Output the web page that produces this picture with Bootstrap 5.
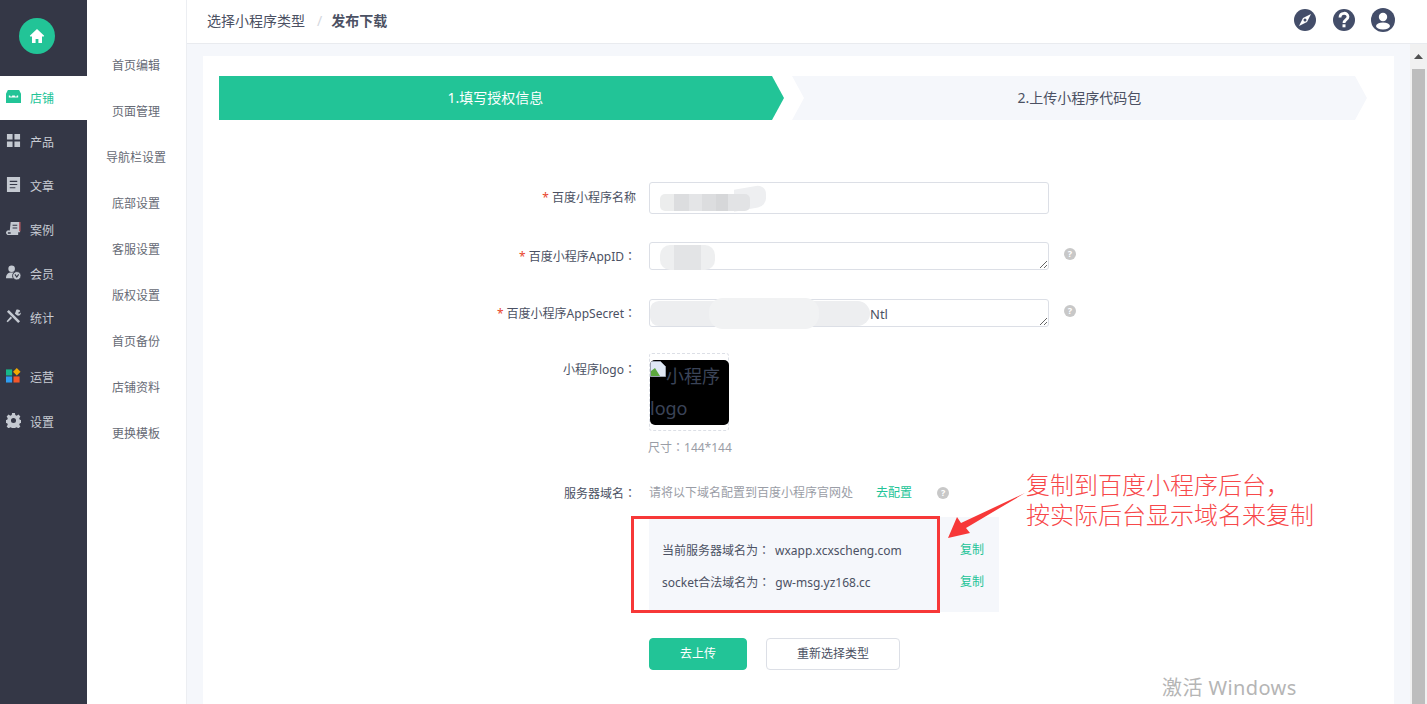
<!DOCTYPE html>
<html lang="zh-CN">
  <head>
    <meta charset="UTF-8" />
    <title>发布下载</title>
    <link href="https://cdn.jsdelivr.net/npm/bootstrap@5.3.0/dist/css/bootstrap.min.css" rel="stylesheet" />
    <style>
      html, body { height: 704px; overflow: hidden; }
      body { font-family: "Noto Sans", "Noto Sans CJK SC", sans-serif; font-size: 12px; color: #4b5163; background: #f5f7fb; }
      .side-main { width: 87px; background: #343746; color: #c8ccd4; }
      .side-logo { height: 76px; padding: 0 0 4px 19px; }
      .logo-dot { width: 36px; height: 36px; border-radius: 50%; background: #22c497; }
      .side-item { height: 44px; padding: 2px 0 0 6px; gap: 9px; color: #c8ccd4; text-decoration: none; }
      .side-item svg { width: 15px; height: 15px; margin-top: -5px; }
      .side-item.on { background: #fff; color: #22c497; }
      .side-gap { height: 15px; }
      .side-item.low { height: 45px; }
      .side-sub { width: 100px; background: #fff; border-right: 1px solid #eceef2; padding-top: 43px; }
      .sub-item { height: 46px; line-height: 46px; text-align: center; color: #666a75; padding-right: 1px; }
      .top-strip { height: 44px; background: #fff; border-bottom: 1px solid #e9ebef; padding: 0 32px 3px 20px; font-size: 14px; }
      .crumb-sep { color: #d4d7de; margin: 0 10px 0 12px; }
      .crumb-now { font-weight: 700; color: #4b5163; font-size: 14px; margin-left: -1px; }
      .top-tools { gap: 15px; }
      .top-icon { width: 24px; height: 24px; }
      .pane-wrap { padding: 12px 16px 0; }
      .white-pane { background: #fff; padding: 20px 27px 0 16px; height: 660px; }
      .scroll-rail { width: 17px; background: #f1f1f1; }
      .scroll-up { height: 25px; }
      .scroll-thumb { width: 13px; height: 640px; background: #bdbdbd; margin-left: 2px; }
      .wizard-a, .wizard-b { height: 44px; font-size: 14px; padding-bottom: 2px; }
      .wizard-a { width: 565px; background: #22c497; color: #fff; padding-right: 12px; clip-path: polygon(0 0, 553px 0, 565px 50%, 553px 100%, 0 100%); }
      .wizard-b { width: 575px; margin-left: 8px; background: #f5f7fb; color: #4b5163; clip-path: polygon(0 0, 563px 0, 575px 50%, 563px 100%, 0 100%, 12px 50%); }
      .form-zone { margin-top: 62px; }
      .field-row { display: flex; }
      .field-name { width: 417px; margin-right: 13px; text-align: right; color: #4b5163; flex: none; }
      .must { color: #e8452c; margin-right: 3px; }
      .wide-colon { font-family: "Noto Sans CJK TC", sans-serif; }
      .field-box { width: 400px; position: relative; flex: none; }
      .text-in { height: 32px; border: 1px solid #dcdfe6; border-radius: 3px; background: #fff; font-size: 12px; padding: 4px 8px; }
      textarea.text-in { height: 28px; min-height: 28px; line-height: 18px; color: #4b5163; display: block; overflow: hidden; }
      textarea.key-in { padding-left: 220px; padding-top: 5px; font-size: 13px; }
      .row-a { line-height: 32px; }
      .row-b { margin-top: 28px; line-height: 27px; }
      .row-c { margin-top: 29px; line-height: 27px; }
      .row-d { margin-top: 26px; line-height: 32px; }
      .row-e { margin-top: 21px; line-height: 30px; }
      .tip-dot { width: 12px; height: 12px; border-radius: 50%; background: #c8c8c8; color: #fff; font-size: 9px; line-height: 12px; text-align: center; font-weight: 700; flex: none; }
      .tip-side { margin: 6px 0 0 15px; }
      .tip-line { margin-left: 25px; }
      .smear { position: absolute; background: #e5e6e8; }
      .smear-a1 { left: 11px; top: 12px; width: 90px; height: 17px; background: linear-gradient(90deg, #eceded 0 16%, #dcdddf 16% 32%, #e4e5e7 32% 47%, #dcdddf 47% 62%, #d6d7d9 62% 76%, #e2e3e5 76% 100%); border-radius: 5px; }
      .smear-a2 { left: 85px; top: 5px; width: 32px; height: 22px; background: #eeeff1; border-radius: 0 10px 8px 0; transform: skewY(-10deg); }
      .smear-b1 { left: 11px; top: 3px; width: 55px; height: 25px; background: linear-gradient(90deg, #eeeff0 0 25%, #e3e4e6 25% 75%, #eeeff0 75% 100%); border-radius: 10px; }
      .smear-c1 { left: 1px; top: 2px; width: 220px; height: 25px; background: #edeef0; border-radius: 10px 14px 14px 10px; }
      .smear-c2 { left: 60px; top: -1px; width: 110px; height: 31px; background: #f1f2f3; border-radius: 14px; }
      .logo-frame { width: 80px; height: 78px; border: 1px dashed #dcdfe6; border-radius: 3px; padding: 6px 0; }
      .logo-black { width: 79px; height: 65px; background: #000; border-radius: 5px; color: #3b4458; font-size: 18px; line-height: 32px; overflow: hidden; }
      .broken-pic { width: 16px; height: 16px; vertical-align: top; margin-top: 1px; }
      .logo-hint { margin: 7px 0 0 -1px; color: #9a9da6; line-height: 18px; font-size: 12px; }
      .muted-line { color: #9a9da6; }
      .go-link { color: #22c497; text-decoration: none; margin-left: 23px; }
      .domain-box { margin-top: 9px; width: 350px; height: 95px; background: #f5f7fb; padding: 17px 15px 0 13px; line-height: 32px; }
      .domain-row { height: 32px; }
      .domain-key { margin-right: 5px; }
      .domain-val { font-size: 12px; }
      .copy-link { color: #22c497; text-decoration: none; }
      .btn-go, .btn-redo { height: 32px; font-size: 12px; border-radius: 4px; padding: 0; line-height: 30px; }
      .btn-go { width: 98px; background: #22c497; border: 1px solid #22c497; color: #fff; }
      .btn-redo { width: 134px; background: #fff; border: 1px solid #dcdfe6; color: #4b5163; margin-left: 19px; }
      .btn-line { margin: 26px 0 0 430px; }
      .mark-rect { position: absolute; left: 631px; top: 516px; width: 309px; height: 97px; border: 3px solid #f73838; }
      .mark-note { position: absolute; left: 1026px; top: 469px; color: #f7484a; font-family: "Noto Sans CJK SC", sans-serif; font-weight: 300; font-size: 24px; line-height: 30px; white-space: nowrap; }
      .mark-arrow { position: absolute; left: 945px; top: 490px; width: 85px; height: 52px; }
      .win-mark { position: absolute; left: 1162px; top: 674px; font-size: 20px; line-height: 28px; letter-spacing: .4px; color: #b5b5b5; font-family: "Noto Sans", "Noto Sans CJK SC", sans-serif; }
    </style>
  </head>
  <body>
    <div class="d-flex">
      <!-- left menu -->
      <div class="side-main flex-shrink-0 vh-100">
        <div class="side-logo d-flex align-items-center">
          <div class="logo-dot d-flex align-items-center justify-content-center">
            <svg width="16" height="16" viewBox="0 0 16 16"><path fill="#fff" d="M8 1 0.8 7.8 2 9 3 8.1V15h3.6v-4h2.8v4H13V8.1l1 .9 1.2-1.2z"/></svg>
          </div>
        </div>
        <a class="side-item on d-flex align-items-center" href="#">
          <svg viewBox="0 0 16 16"><path fill="#22c497" d="M2 1h12l2 4v10H0V5zM3 7v2h10V7h-1.500v1h-2V7h-3v1h-2V7z"/></svg>店铺
        </a>
        <a class="side-item d-flex align-items-center" href="#">
          <svg viewBox="0 0 16 16"><path fill="#c4c9d1" d="M1 1h6v6H1zM9 1h6v6H9zM1 9h6v6H1zM9 9h6v6H9z"/></svg>产品
        </a>
        <a class="side-item d-flex align-items-center" href="#">
          <svg viewBox="0 0 16 16"><path fill="#c4c9d1" d="M1 0h14v16H1zM4 4v1.2h8V4zM4 7.4v1.2h8V7.4zM4 10.8V12h6v-1.2z"/></svg>文章
        </a>
        <a class="side-item d-flex align-items-center" href="#">
          <svg viewBox="0 0 16 16"><path fill="#c4c9d1" d="M5 1h10v11H13v3H3a3 3 0 0 1-3-3 3 3 0 0 1 3-2h1z"/><path fill="#343746" d="M7 4h5v1H7zM7 7h5v1H7zM2 12h3v1.500H2z"/><path fill="#b0515a" d="M14 1h1.500v10H14z"/></svg>案例
        </a>
        <a class="side-item d-flex align-items-center" href="#">
          <svg viewBox="0 0 16 16"><circle cx="6" cy="4" r="3.500" fill="#c4c9d1"/><path fill="#c4c9d1" d="M0 14c0-4 2-6 6-6h2v6z"/><circle cx="11.500" cy="11.500" r="4.500" fill="#c4c9d1" stroke="#343746"/><path fill="none" stroke="#343746" stroke-width="1.200" d="M9.500 10l2 2.800 2-2.800"/></svg>会员
        </a>
        <a class="side-item d-flex align-items-center" href="#">
          <svg viewBox="0 0 16 16"><path fill="#c4c9d1" d="M1 3 3 1l12 12-2 2zM9.500 5 11 .8c2-.8 3.800.2 4.200 1.500L13 4l.8 1.200 2-1.500c.3 2-1.500 3.800-3.800 3.300zM6.500 9.500l-4.700 4.700L.6 13 5 8z"/></svg>统计
        </a>
        <div class="side-gap"></div>
        <a class="side-item d-flex align-items-center" href="#">
          <svg viewBox="0 0 16 16"><rect x="0" y="1.500" width="6.500" height="6.500" fill="#16b98a"/><rect x="0" y="9" width="6.500" height="6.500" fill="#2f9df0"/><rect x="8" y="9" width="6.500" height="6.500" fill="#f4572a"/><path fill="#f2a900" d="M11.500 0 15.500 4l-4 4-4-4z"/></svg>运营
        </a>
        <a class="side-item low d-flex align-items-center" href="#">
          <svg viewBox="0 0 16 16"><path fill="#c4c9d1" fill-rule="evenodd" d="M6.500 0h3l.4 2.200 1.500.7L13.300 1.600l2 2.100-1.200 1.900.6 1.500 2.200.4v3l-2.200.4-.6 1.500 1.200 1.900-2 2.100-1.900-1.300-1.500.6-.4 2.200h-3l-.4-2.200-1.500-.6-1.900 1.300-2-2.100 1.200-1.900-.6-1.500-2.200-.4v-3l2.200-.4.600-1.500L.7 3.700l2-2.100 1.900 1.300 1.500-.7zM8 5.300a2.700 2.700 0 1 0 0 5.400 2.700 2.700 0 0 0 0-5.400z"/></svg>设置
        </a>
      </div>

      <!-- second menu -->
      <div class="side-sub flex-shrink-0 vh-100">
        <div class="sub-item">首页编辑</div>
        <div class="sub-item">页面管理</div>
        <div class="sub-item">导航栏设置</div>
        <div class="sub-item">底部设置</div>
        <div class="sub-item">客服设置</div>
        <div class="sub-item">版权设置</div>
        <div class="sub-item">首页备份</div>
        <div class="sub-item">店铺资料</div>
        <div class="sub-item">更换模板</div>
      </div>

      <div class="flex-grow-1 d-flex flex-column vh-100 overflow-hidden">
        <div class="top-strip d-flex align-items-center justify-content-between flex-shrink-0">
          <div><span>选择小程序类型</span><span class="crumb-sep">/</span><span class="crumb-now">发布下载</span></div>
          <div class="d-flex top-tools align-items-center">
            <svg class="top-icon" viewBox="0 0 24 24"><circle cx="12" cy="12" r="11" fill="#434d69"/><path fill="#fff" d="M18 6 14 14 6 18 10 10z"/><circle cx="12" cy="12" r="1.500" fill="#434d69"/></svg>
            <svg class="top-icon" viewBox="0 0 24 24"><circle cx="12" cy="12" r="11" fill="#434d69"/><path fill="none" stroke="#fff" stroke-width="2.800" d="M8 9.500c0-5.500 8-5.500 8-.8 0 3-4 2.800-4 6.300"/><rect x="10.500" y="16.300" width="3" height="3" fill="#fff"/></svg>
            <svg class="top-icon" viewBox="0 0 24 24"><circle cx="12" cy="12" r="12" fill="#434d69"/><circle cx="12" cy="9" r="4.200" fill="#fff"/><ellipse cx="12" cy="18" rx="7" ry="3.500" fill="#fff"/></svg>
          </div>
        </div>

        <div class="d-flex flex-grow-1">
          <div class="flex-grow-1 pane-wrap">
            <div class="white-pane">
              <div class="d-flex">
                <div class="wizard-a d-flex align-items-center justify-content-center">1.填写授权信息</div>
                <div class="wizard-b d-flex align-items-center justify-content-center">2.上传小程序代码包</div>
              </div>

              <div class="form-zone">
                <div class="field-row row-a">
                  <div class="field-name"><span class="must">*</span>百度小程序名称</div>
                  <div class="field-box">
                    <input class="form-control text-in" type="text" />
                    <div class="smear smear-a2"></div>
                    <div class="smear smear-a1"></div>
                  </div>
                </div>

                <div class="field-row row-b">
                  <div class="field-name"><span class="must">*</span>百度小程序AppID<span class="wide-colon" lang="zh-TW">：</span></div>
                  <div class="field-box">
                    <textarea class="form-control text-in"></textarea>
                    <div class="smear smear-b1"></div>
                  </div>
                  <div class="tip-dot tip-side">?</div>
                </div>

                <div class="field-row row-c">
                  <div class="field-name"><span class="must">*</span>百度小程序AppSecret<span class="wide-colon" lang="zh-TW">：</span></div>
                  <div class="field-box">
                    <textarea class="form-control text-in key-in">Ntl</textarea>
                    <div class="smear smear-c1"></div>
                    <div class="smear smear-c2"></div>
                  </div>
                  <div class="tip-dot tip-side">?</div>
                </div>

                <div class="field-row row-d">
                  <div class="field-name">小程序logo<span class="wide-colon" lang="zh-TW">：</span></div>
                  <div class="field-box">
                    <div class="logo-frame">
                      <div class="logo-black"><svg class="broken-pic" viewBox="0 0 16 16"><path fill="#dfe8f5" stroke="#9aa3b0" d="M.5.500h10l5 5v10H.5z"/><path fill="#5ca83e" d="M1 15V10l4-3 5 8z"/></svg>小程序 logo</div>
                    </div>
                    <div class="logo-hint">尺寸<span class="wide-colon" lang="zh-TW">：</span>144*144</div>
                  </div>
                </div>

                <div class="field-row row-e">
                  <div class="field-name">服务器域名<span class="wide-colon" lang="zh-TW">：</span></div>
                  <div class="field-box">
                    <div class="d-flex align-items-center">
                      <span class="muted-line">请将以下域名配置到百度小程序官网处</span>
                      <a class="go-link" href="#">去配置</a>
                      <div class="tip-dot tip-line">?</div>
                    </div>
                    <div class="domain-box">
                      <div class="domain-row d-flex justify-content-between">
                        <div><span class="domain-key">当前服务器域名为<span class="wide-colon" lang="zh-TW">：</span></span><span class="domain-val">wxapp.xcxscheng.com</span></div>
                        <a class="copy-link" href="#">复制</a>
                      </div>
                      <div class="domain-row d-flex justify-content-between">
                        <div><span class="domain-key">socket合法域名为<span class="wide-colon" lang="zh-TW">：</span></span><span class="domain-val">gw-msg.yz168.cc</span></div>
                        <a class="copy-link" href="#">复制</a>
                      </div>
                    </div>
                  </div>
                </div>

                <div class="btn-line d-flex">
                  <button type="button" class="btn btn-go">去上传</button>
                  <button type="button" class="btn btn-redo">重新选择类型</button>
                </div>
              </div>
            </div>
          </div>
          <div class="scroll-rail flex-shrink-0">
            <div class="scroll-up d-flex align-items-center justify-content-center">
              <svg width="9" height="5" viewBox="0 0 9 5"><path fill="#505050" d="M4.500 0 9 5H0z"/></svg>
            </div>
            <div class="scroll-thumb"></div>
          </div>
        </div>
      </div>
    </div>

    <!-- annotation drawn over the screenshot -->
    <div class="mark-rect"></div>
    <svg class="mark-arrow" viewBox="0 0 85 52"><path fill="#f73838" d="M3 48 12 27 16 33 80 3 21 38 25 43z"/></svg>
    <div class="mark-note">复制到百度小程序后台，<br />按实际后台显示域名来复制</div>
    <div class="win-mark">激活 Windows</div>

    <script src="https://cdn.jsdelivr.net/npm/bootstrap@5.3.0/dist/js/bootstrap.bundle.min.js"></script>
  </body>
</html>
